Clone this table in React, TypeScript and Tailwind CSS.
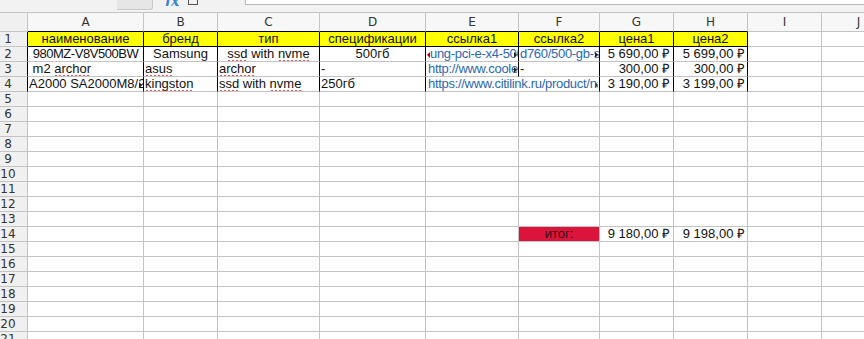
import React from 'react';

const cols = [
  { key: 'A', w: 'w-[116px]' },
  { key: 'B', w: 'w-[74px]' },
  { key: 'C', w: 'w-[102px]' },
  { key: 'D', w: 'w-[106px]' },
  { key: 'E', w: 'w-[93px]' },
  { key: 'F', w: 'w-[81px]' },
  { key: 'G', w: 'w-[74px]' },
  { key: 'H', w: 'w-[74px]' },
  { key: 'I', w: 'w-[74px]' },
  { key: 'J', w: 'w-[74px]' },
];

const grid = 'border-[#c4c4c4]';

// red wavy spellcheck underline
const Sp = ({ children }: { children: React.ReactNode }) => (
  <span className="relative inline-block">
    {children}
    <svg className="absolute -bottom-[2px] left-0 h-[3px] w-full" preserveAspectRatio="none">
      <defs>
        <pattern id="squiggle" width="4" height="3" patternUnits="userSpaceOnUse">
          <path d="M0 2.5L2 0.5L4 2.5" fill="none" stroke="#e8281f" strokeWidth="1.2" />
        </pattern>
      </defs>
      <rect width="100%" height="3" fill="url(#squiggle)" />
    </svg>
  </span>
);

// little marker that LibreOffice draws when text is cut off
const ClipRight = () => (
  <span className="absolute right-[1px] top-[5px] h-0 w-0 border-y-[3px] border-l-[3px] border-y-transparent border-l-[#222]" />
);
const ClipLeft = () => (
  <span className="absolute left-[1px] top-[5px] h-0 w-0 border-y-[3px] border-r-[3px] border-y-transparent border-r-[#c00000]" />
);

const header = ['наименование', 'бренд', 'тип', 'спецификации', 'ссылка1', 'ссылка2', 'цена1', 'цена2'];

type CellDef = {
  content?: React.ReactNode;
  align?: string;
  extra?: React.ReactNode;
  cls?: string;
  spill?: boolean;
};

const link = 'text-[#2b68b1] tracking-[-0.3px]';

const dataRows: Record<number, Record<string, CellDef>> = {
  2: {
    A: { content: <span className="tracking-[-0.45px]">980MZ-V8V500BW</span>, align: 'justify-center' },
    B: { content: 'Samsung', align: 'justify-center' },
    C: {
      content: (
        <>
          <Sp>ssd</Sp> with <Sp>nvme</Sp>
        </>
      ),
      align: 'justify-center',
    },
    D: { content: '500гб', align: 'justify-center' },
    E: {
      content: <span className={link}>ung-pci-e-x4-500gb</span>,
      align: 'justify-start pl-[4px]',
      extra: (
        <>
          <ClipLeft />
          <ClipRight />
        </>
      ),
    },
    F: {
      content: <span className={link}>d760/500-gb-ssd</span>,
      align: 'justify-start pl-[1px]',
      extra: <ClipRight />,
    },
    G: { content: '5 690,00 ₽', align: 'justify-end pr-[3px]' },
    H: { content: '5 699,00 ₽', align: 'justify-end pr-[2px]' },
  },
  3: {
    A: {
      content: (
        <>
          &nbsp;m2 <Sp>archor</Sp>
        </>
      ),
    },
    B: { content: <Sp>asus</Sp> },
    C: { content: <Sp>archor</Sp> },
    D: { content: '-' },
    E: {
      content: <span className={link}>http://www.coolers</span>,
      align: 'justify-start pl-[2px]',
      extra: <ClipRight />,
    },
    F: { content: '-' },
    G: { content: '300,00 ₽', align: 'justify-end pr-[3px]' },
    H: { content: '300,00 ₽', align: 'justify-end pr-[2px]' },
  },
  4: {
    A: { content: 'A2000 SA2000M8/250G', extra: <ClipRight /> },
    B: { content: <Sp>kingston</Sp> },
    C: {
      content: (
        <>
          <Sp>ssd</Sp> with <Sp>nvme</Sp>
        </>
      ),
    },
    D: { content: '250гб' },
    E: {
      content: (
        <span className={`block w-[170px] overflow-hidden ${link}`}>
          https://www.citilink.ru/product/nakopitel
        </span>
      ),
      align: 'justify-start pl-[2px]',
      cls: 'z-10 !border-r-transparent',
      spill: true,
    },
    F: { extra: <ClipRight /> },
    G: { content: '3 190,00 ₽', align: 'justify-end pr-[3px]' },
    H: { content: '3 199,00 ₽', align: 'justify-end pr-[2px]' },
  },
  14: {
    F: { content: 'итог:', align: 'justify-center', cls: 'bg-[#dc143c] text-[#3a0a10]' },
    G: { content: '9 180,00 ₽', align: 'justify-end pr-[3px]' },
    H: { content: '9 198,00 ₽', align: 'justify-end pr-[2px]' },
  },
};

const App = () => {
  const rows = Array.from({ length: 21 }, (_, i) => i + 1);

  return (
    <div className="h-[339px] w-[864px] overflow-hidden bg-white font-['Liberation_Sans',Arial,sans-serif] text-[13px] text-[#111]">
      {/* formula bar remnant */}
      <div className={`relative flex h-[13px] border-b ${grid} bg-[#f2f2f2]`}>
        <div className="ml-[117px] h-[10px] w-[36px] rounded-br-[3px] border-r border-b border-[#c9c9c9] bg-[#e6e6e6]" />
        <div className="ml-[12px] flex h-[6px] items-end overflow-hidden">
          <span className="font-['DejaVu_Serif',serif] text-[14px] leading-[10px] font-bold italic text-[#3d86cf]">fx</span>
        </div>
        <div className="ml-[9px] h-[5px] w-[10px] border-x border-b border-[#555]" />
        <div className="ml-[47px] h-[5px] flex-1 border-b border-l border-[#b9b9b9] bg-white" />
      </div>

      {/* column headers */}
      <div className="flex h-[19px]">
        <div className={`w-[28px] shrink-0 border-r border-b ${grid} bg-[#f0f0f0]`} />
        {cols.map((c, i) => (
          <div
            key={c.key}
            className={`${c.w} flex shrink-0 items-center justify-center border-r border-b ${grid} ${
              i < 8 ? '!border-b-black' : ''
            } bg-[#f7f7f7] font-['DejaVu_Sans',sans-serif] text-[12px] text-[#333]`}
          >
            {c.key}
          </div>
        ))}
      </div>

      {/* rows */}
      {rows.map((r) => (
        <div key={r} className="flex h-[15px]">
          <div
            className={`flex w-[28px] shrink-0 border-r border-b ${grid} ${
              r <= 4 ? '!border-r-black' : ''
            } bg-[#f0f0f0]`}
          >
            <span className="w-[16px] text-center font-['DejaVu_Sans',sans-serif] text-[12px] leading-[14px] text-[#333]">
              {r}
            </span>
          </div>
          {cols.map((c, i) => {
            const def: CellDef | undefined =
              r === 1 && i < 8 ? { content: header[i], align: 'justify-center' } : dataRows[r]?.[c.key];
            const yellow = r === 1 && i < 8;
            const dark = r <= 4 && i < 8;
            return (
              <div
                key={c.key}
                className={`relative flex ${c.w} shrink-0 items-center whitespace-nowrap border-r border-b ${grid} ${
                  def?.spill ? 'overflow-visible' : 'overflow-hidden'
                } ${dark ? '!border-r-black' : ''} ${yellow ? 'bg-[#ffff00] !border-b-black' : ''} ${
                  def?.align ?? 'justify-start pl-[1px]'
                } ${def?.cls ?? ''} leading-[14px]`}
              >
                {def?.content !== undefined && <span className="shrink-0 whitespace-pre">{def.content}</span>}
                {def?.extra}
              </div>
            );
          })}
        </div>
      ))}
    </div>
  );
};

export default App;
